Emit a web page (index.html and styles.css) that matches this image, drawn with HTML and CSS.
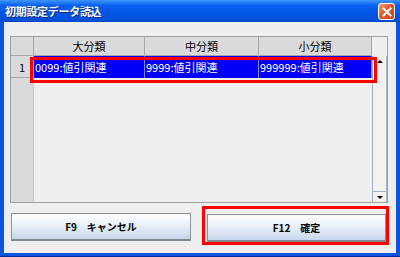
FILE: index.html
```html
<!DOCTYPE html>
<html lang="ja">
<head>
    <meta charset="UTF-8">
    <title>初期設定データ読込</title>
    <link rel="stylesheet" href="styles.css">
</head>
<body>
    <div class="window">
        <div class="titlebar">
            <span class="title">初期設定データ読込</span>
            <button type="button" class="close-btn" aria-label="閉じる">
                <svg viewBox="0 0 10 10" width="10" height="10"><path d="M1.5 1.5L8.5 8.5M8.5 1.5L1.5 8.5" stroke="#fff" stroke-width="2" stroke-linecap="square"/></svg>
            </button>
        </div>

        <div class="client">
            <div class="grid">
                <div class="cell corner"></div>
                <div class="cell head">大分類</div>
                <div class="cell head">中分類</div>
                <div class="cell head">小分類</div>
                <div class="blank"></div>

                <div class="cell rownum">1</div>
                <div class="cell data">0099:値引関連</div>
                <div class="cell data">9999:値引関連</div>
                <div class="cell data">999999:値引関連</div>

                <div class="scrollbar">
                    <span class="arrow up"></span>
                    <span class="track"></span>
                    <span class="arrow down"></span>
                </div>

                <div class="rownum-fill"></div>
                <div class="empty"></div>

                <div class="mark mark-row"></div>
            </div>

            <div class="buttons">
                <button type="button" class="fn-btn">F9　キャンセル</button>
                <div class="mark-wrap">
                    <button type="button" class="fn-btn">F12　確定</button>
                </div>
            </div>
        </div>
    </div>
</body>
</html>
```

FILE: styles.css
```css
* {
    margin: 0;
    padding: 0;
    box-sizing: border-box;
}

body {
    width: 400px;
    height: 257px;
    overflow: hidden;
    font-family: "Noto Sans CJK JP", "DejaVu Sans", sans-serif;
    background: #fff;
}

.window {
    width: 400px;
    height: 257px;
    display: flex;
    flex-direction: column;
    background: #0a55e0;
    border-bottom: 1px solid #0030a0;
}

.titlebar {
    height: 22px;
    display: flex;
    align-items: center;
    justify-content: space-between;
    padding: 0 5px 0 5px;
    background: linear-gradient(180deg, #3d95ff 0%, #0a60f0 25%, #0055e5 60%, #0050d8 90%, #0048c8 100%);
}

.title {
    color: #fff;
    font-size: 11px;
    font-weight: bold;
    letter-spacing: -0.3px;
    text-shadow: 1px 1px 0 #0a2a80;
}

.close-btn {
    width: 17px;
    height: 17px;
    margin-top: 1px;
    border: 1px solid #fff;
    border-radius: 3px;
    background: linear-gradient(135deg, #f19a7c 0%, #e2582f 45%, #c9411d 100%);
    display: flex;
    align-items: center;
    justify-content: center;
}

.client {
    flex: 1;
    margin: 0 4px 3px 4px;
    background: #efefef;
    padding: 14px 0 0 6px;
    display: flex;
    flex-direction: column;
}

.grid {
    position: relative;
    width: 378px;
    height: 167px;
    border: 1px solid #a0a0a0;
    background: #efefef;
    display: grid;
    grid-template-columns: 23px 111px 114px 113px 15px;
    grid-template-rows: 19px 22px 1fr;
}

.cell {
    font-size: 11px;
    display: flex;
    align-items: center;
    white-space: nowrap;
    overflow: hidden;
}

.corner,
.head {
    background: #dadada;
    border-right: 1px solid #a8a8a8;
    border-bottom: 1px solid #a8a8a8;
}

.head {
    justify-content: center;
    color: #000;
}

.blank {
    grid-row: 1;
    grid-column: 5;
}

.rownum {
    background: #dadada;
    border-right: 1px solid #a8a8a8;
    border-bottom: 1px solid #a8a8a8;
    justify-content: center;
    color: #000;
}

.data {
    background: #0000f8;
    color: #fff;
    padding-left: 1px;
    border-right: 1px solid #8080ff;
}

.rownum-fill {
    grid-column: 1;
    grid-row: 3;
    background: #dadada;
    border-right: 1px solid #c8c8c8;
}

.empty {
    grid-column: 2 / 5;
    grid-row: 3;
}

.scrollbar {
    grid-column: 5;
    grid-row: 2 / 4;
    display: flex;
    flex-direction: column;
    border-left: 1px solid #9fb0c8;
    border-right: 1px solid #9fb0c8;
    background: #f4f2ee;
}

.arrow {
    height: 11px;
    display: flex;
    justify-content: center;
    align-items: center;
}

.arrow::before {
    content: "";
    border-left: 3px solid transparent;
    border-right: 3px solid transparent;
}

.arrow.up::before {
    border-bottom: 3px solid #000;
}

.arrow.down::before {
    border-top: 3px solid #000;
}

.arrow.down {
    border-top: 1px solid #9fb0c8;
}

.track {
    flex: 1;
}

.mark {
    position: absolute;
    border: 3px solid #ff0000;
}

.mark-row {
    left: 19px;
    top: 20px;
    width: 347px;
    height: 26px;
}

.buttons {
    display: flex;
    gap: 12px;
    margin-top: 10px;
    padding-left: 1px;
}

.fn-btn {
    width: 180px;
    height: 28px;
    font-family: "Noto Sans CJK JP", "DejaVu Sans", sans-serif;
    font-size: 10px;
    font-weight: bold;
    color: #000;
    border: 1px solid #8a9098;
    border-bottom: 2px solid #808890;
    background: linear-gradient(180deg, #ffffff 0%, #eef4fb 35%, #d6e3f1 75%, #c3d5e9 100%);
}

.mark-wrap {
    border: 3px solid #ff0000;
    padding: 4px 0 0 0;
    margin-top: -7px;
    margin-left: -1px;
}

.mark-wrap .fn-btn {
    width: 179px;
    margin-left: 2px;
    margin-right: 0;
}
```
